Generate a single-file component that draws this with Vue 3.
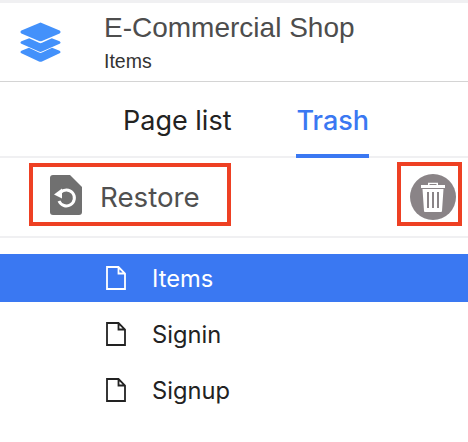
<template>
  <div class="page">
    <header class="head">
      <svg class="logo" viewBox="0 0 41 41" width="41" height="41">
        <path d="M20.5 0.5 L39.6 8.6 Q41.5 10 39.6 11.6 L22 19 Q20.5 19.6 19 19 L1.4 11.6 Q-0.5 10 1.4 8.6 Z" />
        <path d="M1.4 19.2 L9.2 16.2 L19 20.8 Q20.5 21.5 22 20.8 L31.8 16.2 L39.6 19.2 Q41.5 20.5 39.6 21.8 L22 29.6 Q20.5 30.2 19 29.6 L1.4 21.8 Q-0.5 20.5 1.4 19.2 Z" />
        <path d="M1.4 28.7 L8.9 25.8 L19 30.6 Q20.5 31.3 22 30.6 L32.1 25.8 L39.6 28.7 Q41.5 30 39.6 31.3 L22 39.5 Q20.5 40.1 19 39.5 L1.4 31.3 Q-0.5 30 1.4 28.7 Z" />
      </svg>
      <div class="titles">
        <div class="shop">E-Commercial Shop</div>
        <div class="sub">Items</div>
      </div>
    </header>

    <nav class="tabs">
      <span v-for="tab in tabs" :key="tab" class="tab" :class="{ active: tab === activeTab }">{{ tab }}</span>
    </nav>

    <div class="toolbar">
      <div class="restore mark">
        <svg viewBox="0 0 32 40" width="32" height="40">
          <path d="M3 0 H20 L32 12 V37 Q32 40 29 40 H3 Q0 40 0 37 V3 Q0 0 3 0 Z" fill="#707070" />
          <path d="M10.5 17.5 A8 8 0 1 1 9 26" fill="none" stroke="#fff" stroke-width="3" />
          <path d="M12 13.5 V23.5 L4 19.5 Z" fill="#fff" />
        </svg>
        <span>Restore</span>
      </div>
      <div class="trash mark">
        <div class="circle">
          <svg viewBox="0 0 24 30" width="24" height="30">
            <path d="M7 3 V0.8 H17 V3 H24 V6 H0 V3 Z M8.5 3 H15.5 V2 H8.5 Z" fill="#fff" fill-rule="evenodd" />
            <path d="M1.5 7 H22.5 L21 29 Q21 30 20 30 H4 Q3 30 3 29 Z" fill="#fff" />
            <rect x="6" y="10" width="2" height="16" fill="#8a8487" />
            <rect x="11" y="10" width="2" height="16" fill="#8a8487" />
            <rect x="16" y="10" width="2" height="16" fill="#8a8487" />
          </svg>
        </div>
      </div>
    </div>

    <ul class="pages">
      <li v-for="item in pages" :key="item" class="row" :class="{ current: item === 'Items' }">
        <svg viewBox="0 0 20 24" width="20" height="24">
          <path d="M1 1 H12.5 L19 7.5 V23 H1 Z M12.5 1 V7.5 H19" fill="none" stroke="currentColor" stroke-width="1.8" />
        </svg>
        <span>{{ item }}</span>
      </li>
    </ul>
  </div>
</template>

<script setup>
const tabs = ['Page list', 'Trash']
const activeTab = 'Trash'
const pages = ['Items', 'Signin', 'Signup']
</script>

<style scoped>
.page {
  width: 468px;
  height: 442px;
  overflow: hidden;
  background: #fff;
  font-family: Inter, "Liberation Sans", sans-serif;
  color: #222;
}

.head {
  display: flex;
  align-items: center;
  height: 82px;
  box-sizing: border-box;
  border-bottom: 1px solid #d4d4d4;
  border-top: 3px solid #f0f0f2;
  padding-left: 20px;
}

.logo {
  margin-right: 43px;
  fill: #4391fb;
}

.shop {
  font-family: "Liberation Sans", sans-serif;
  font-size: 28px;
  line-height: 32px;
  color: #4d4d4d;
}

.sub {
  font-family: "Liberation Sans", sans-serif;
  font-size: 19.5px;
  line-height: 20px;
  margin-top: 7px;
  margin-bottom: 1px;
  color: #333;
}

.tabs {
  display: flex;
  height: 76px;
  box-sizing: border-box;
  padding-left: 123px;
  gap: 65px;
  border-bottom: 2px solid #f0f0f2;
}

.tab {
  height: 76px;
  box-sizing: border-box;
  padding-top: 23px;
  font-size: 27px;
  line-height: 32px;
  color: #222;
}

.tab.active {
  color: #3a78f2;
  font-weight: 500;
  border-bottom: 4px solid #3a78f2;
}

.toolbar {
  display: flex;
  justify-content: space-between;
  align-items: flex-start;
  height: 80px;
  box-sizing: border-box;
  padding: 4px 6px 0 29px;
  border-bottom: 2px solid #f0f0f2;
}

.mark {
  display: flex;
  align-items: center;
  height: 64px;
  box-sizing: border-box;
  border: 4px solid #ee4023;
}

.restore {
  width: 202px;
  height: 63px;
  margin-top: 1px;
  padding-left: 17px;
  gap: 18px;
  font-size: 27.7px;
  color: #505050;
}

.restore span {
  padding-top: 5px;
}

.trash {
  width: 65px;
  justify-content: flex-end;
  padding: 6px 2px 0 0;
}

.circle {
  display: flex;
  align-items: center;
  justify-content: center;
  width: 46px;
  height: 46px;
  border-radius: 50%;
  background: #8a8487;
}

.pages {
  list-style: none;
  margin: 16px 0 0;
  padding: 0;
}

.row {
  display: flex;
  align-items: center;
  gap: 27px;
  height: 56px;
  padding-left: 106px;
  font-size: 23.7px;
  color: #222;
}

.row span {
  margin-left: -1px;
}

.row.current {
  height: 48px;
  margin-bottom: 4px;
  background: #3a78f2;
  color: #fff;
}
</style>
